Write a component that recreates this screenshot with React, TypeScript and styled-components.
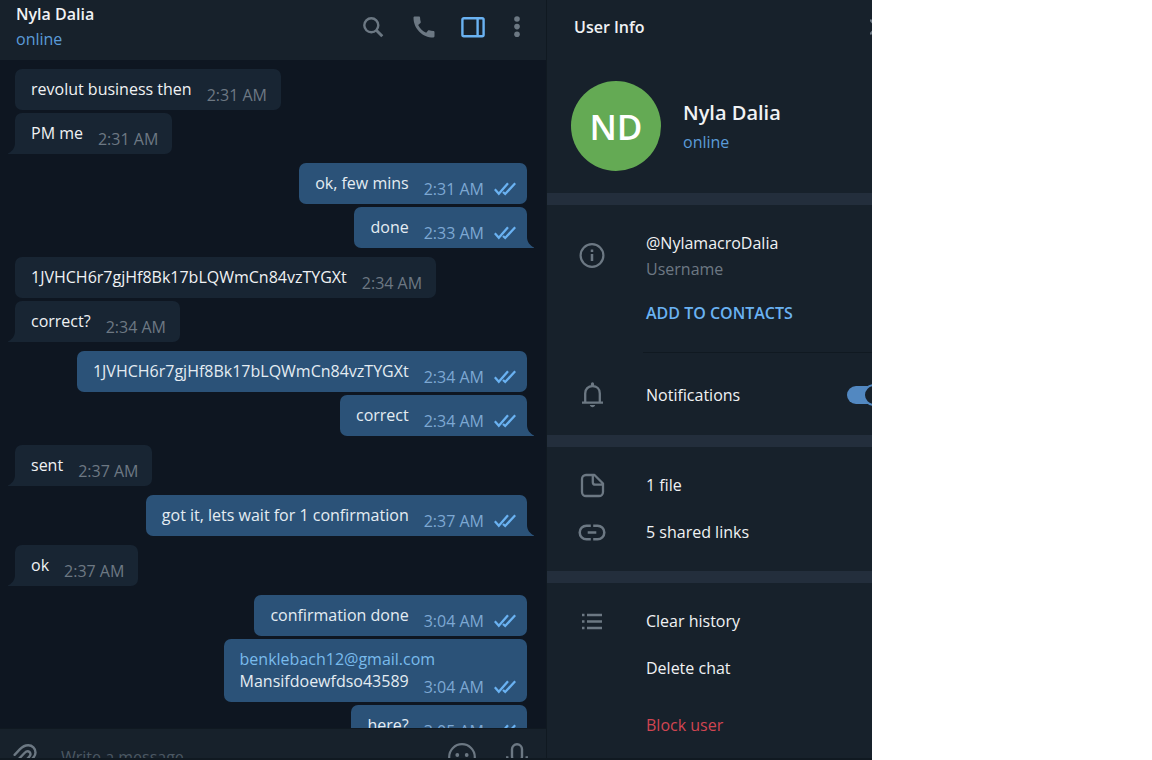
import React from "react";
import styled, { createGlobalStyle, css } from "styled-components";

const c = {
  panel: "#17212b",
  chat: "#0e1621",
  divider: "#232e3c",
  line: "#101921",
  inBubble: "#182533",
  outBubble: "#2b5278",
  text: "#f0f2f4",
  outText: "#e4ecf2",
  muted: "#6d7883",
  icon: "#6c7883",
  accent: "#6ab2f2",
  link: "#79bbec",
  online: "#5b9bd8",
  outTime: "#7da8d3",
  danger: "#d14552",
};

const GlobalStyle = createGlobalStyle`
  *, *::before, *::after { box-sizing: border-box; }
  body {
    margin: 0;
    background: #fff;
    font-family: "Open Sans", "Noto Sans", sans-serif;
    font-size: 16px;
    line-height: 22px;
  }
`;

const Window = styled.div`
  display: flex;
  height: 100vh;
  margin-right: 280px;
  overflow: hidden;
  color: ${c.text};
  background: ${c.panel};
  border-bottom: 2px solid ${c.line};
`;

const Chat = styled.main`
  display: flex;
  flex: 1;
  min-width: 0;
  flex-direction: column;
  border-right: 1px solid ${c.line};
`;

const ChatHeader = styled.header`
  display: flex;
  flex: none;
  justify-content: space-between;
  height: 60px;
  padding: 2px 18px 0 16px;
`;

const Peer = styled.div`
  line-height: 25px;
`;

const PeerName = styled.h1`
  margin: 0;
  font-size: 16px;
  font-weight: 600;
  line-height: inherit;
`;

const Online = styled.div`
  color: ${c.online};
`;

const Tools = styled.div`
  display: flex;
  gap: 23px;
  height: 50px;
  align-items: center;
`;

const IconButton = styled.button<{ $active?: boolean }>`
  display: flex;
  flex: none;
  padding: 0;
  border: 0;
  background: none;
  color: ${(p) => (p.$active ? c.accent : c.icon)};
  cursor: pointer;
`;

const Messages = styled.section`
  display: flex;
  flex: 1;
  min-height: 0;
  flex-direction: column;
  gap: 9px;
  overflow: hidden;
  padding: 9px 19px 0 15px;
  background: ${c.chat};
`;

const Group = styled.div<{ $out?: boolean }>`
  display: flex;
  flex: none;
  flex-direction: column;
  gap: 3px;
  align-items: ${(p) => (p.$out ? "flex-end" : "flex-start")};
`;

const Bubble = styled.article<{ $out?: boolean; $tail?: boolean }>`
  position: relative;
  padding: 9px ${(p) => (p.$out ? 11 : 14)}px 10px 16px;
  border-radius: 7px;
  background: ${(p) => (p.$out ? c.outBubble : c.inBubble)};
  color: ${(p) => (p.$out ? c.outText : c.text)};
  white-space: nowrap;
  ${(p) => p.$tail && (p.$out
    ? css`border-bottom-right-radius: 0;`
    : css`border-bottom-left-radius: 0;`)}
`;

const Tail = styled.svg<{ $out?: boolean }>`
  position: absolute;
  bottom: 0;
  ${(p) => (p.$out ? css`left: 100%;` : css`right: 100%; transform: scaleX(-1);`)}
  fill: ${(p) => (p.$out ? c.outBubble : c.inBubble)};
`;

const LastLine = styled.div`
  display: flex;
  align-items: flex-end;
  gap: 15px;
`;

const MailLink = styled.a`
  display: block;
  width: 0;
  color: ${c.link};
  text-decoration: none;
`;

const Meta = styled.div<{ $out?: boolean }>`
  display: flex;
  align-items: center;
  gap: 10px;
  margin-bottom: -6px;
  color: ${(p) => (p.$out ? c.outTime : c.muted)};
`;

const Ticks = styled.svg`
  fill: none;
  stroke: ${c.accent};
  stroke-width: 2.3;
`;

const Composer = styled.form`
  flex: none;
  height: 30px;
  overflow: hidden;
  border-top: 1px solid ${c.line};
`;

const ComposerRow = styled.div`
  display: flex;
  height: 56px;
  align-items: center;
  gap: 23px;
  padding: 0 15px 0 10px;
`;

const ComposerTools = styled.div`
  display: flex;
  gap: 27px;
`;

const MessageInput = styled.input`
  flex: 1;
  min-width: 0;
  padding: 0;
  border: 0;
  outline: 0;
  background: none;
  color: ${c.text};
  font: inherit;
  &::placeholder { color: #4b5863; opacity: 1; }
`;

const Info = styled.aside`
  flex: 0 0 325px;
  overflow: hidden;
`;

const InfoContent = styled.div`
  width: calc(100% + 36px);
`;

const InfoHeader = styled.header`
  display: flex;
  align-items: center;
  justify-content: space-between;
  height: 54px;
  padding: 0 24px 0 27px;
`;

const InfoTitle = styled.h2`
  margin: 0;
  font-size: 16px;
  font-weight: 600;
`;

const Profile = styled.div`
  display: flex;
  align-items: center;
  gap: 22px;
  padding: 27px 24px 22px;
`;

const ProfileText = styled.div`
  padding-bottom: 4px;
`;

const Avatar = styled.div`
  display: grid;
  flex: none;
  place-items: center;
  width: 90px;
  height: 90px;
  padding-top: 2px;
  border-radius: 50%;
  background: #64aa54;
  color: #fff;
  font-size: 35px;
  font-weight: 600;
  line-height: 48px;
`;

const ProfileName = styled.h3`
  margin: 0;
  font-size: 20px;
  font-weight: 600;
  line-height: 36px;
`;

const Section = styled.section<{ $pad: string }>`
  padding: ${(p) => p.$pad};
  border-top: 12px solid ${c.divider};
`;

const Row = styled.div<{ $h?: number }>`
  display: grid;
  grid-template-columns: 38px 1fr auto;
  column-gap: 35px;
  align-items: center;
  min-height: ${(p) => p.$h ?? 47}px;
  padding: 0 23px 0 26px;
`;

const RowIcon = styled.span`
  display: flex;
  justify-content: center;
  color: ${c.icon};
`;

const Action = styled.button<{ $tone?: "accent" | "danger" }>`
  justify-self: start;
  padding: 0;
  border: 0;
  background: none;
  font: inherit;
  text-align: left;
  cursor: pointer;
  color: ${(p) => (p.$tone === "danger" ? c.danger : p.$tone === "accent" ? c.accent : c.text)};
  font-weight: ${(p) => (p.$tone === "accent" ? 600 : 400)};
`;

const Username = styled.div`
  line-height: 26px;
`;

const Caption = styled.div`
  color: ${c.muted};
`;

const Rule = styled.hr`
  height: 1px;
  margin: 9px 0 18px 96px;
  border: 0;
  background: ${c.line};
`;

const Toggle = styled.input`
  position: relative;
  width: 38px;
  height: 18px;
  margin: 0;
  appearance: none;
  border-radius: 9px;
  background: #5288c1;
  cursor: pointer;
  &::after {
    content: "";
    position: absolute;
    top: -2px;
    right: 0;
    width: 22px;
    height: 22px;
    border: 2px solid #5288c1;
    border-radius: 50%;
    background: ${c.panel};
  }
`;

type IconProps = { w?: number; h?: number; sw?: number; children: React.ReactNode };
const Icon = ({ w = 28, h = 28, sw = 2.2, children }: IconProps) => (
  <svg width={w} height={h} viewBox={`0 0 ${w} ${h}`} fill="none" stroke="currentColor" strokeWidth={sw} aria-hidden="true">
    {children}
  </svg>
);

const SearchIcon = () => (
  <Icon w={28} h={24} sw={2.4}><circle cx="12.3" cy="10.3" r="7" /><path d="M17.3 15.3 23.3 21.3" strokeWidth="2.9" /></Icon>
);
const PhoneIcon = () => (
  <svg width="28" height="28" viewBox="0 0 24 24" fill="currentColor" aria-hidden="true">
    <path d="M20.01 15.38c-1.23 0-2.42-.2-3.53-.56-.35-.12-.74-.03-1.01.24l-1.57 1.97c-2.83-1.35-5.48-3.9-6.89-6.83l1.95-1.66c.27-.28.35-.67.24-1.02-.37-1.11-.56-2.3-.56-3.53 0-.54-.45-.99-.99-.99H4.19C3.65 3 3 3.24 3 3.99 3 13.28 10.73 21 20.01 21c.71 0 .99-.63.99-1.18v-3.45c0-.54-.45-.99-.99-.99z" />
  </svg>
);
const PanelIcon = () => (
  <Icon w={24} h={24} sw={2.4}><rect x="1.4" y="3.2" width="21.2" height="18" rx="1.5" /><path d="M16.6 3.2v18" /></Icon>
);
const MoreIcon = () => (
  <svg width="20" height="24" viewBox="0 0 20 24" fill="currentColor" aria-hidden="true">
    <circle cx="9" cy="4" r="2.8" /><circle cx="9" cy="11.6" r="2.8" /><circle cx="9" cy="19.2" r="2.8" />
  </svg>
);
const CloseIcon = () => (
  <Icon w={14} h={16} sw={2.5}><path d="m1 1.5 12 13M13 1.5 1 14.5" strokeLinecap="round" /></Icon>
);
const InfoIcon = () => (
  <Icon sw={2.2}><circle cx="14" cy="13.5" r="11.4" /><path d="M14 12v7M14 7.5v2.5" strokeWidth="2.5" /></Icon>
);
const BellIcon = () => (
  <Icon sw={2.3}>
    <path d="M7.2 20.8v-8.4c0-4.4 3-7.2 7.3-7.2s7.3 2.8 7.3 7.2v8.4M4 21.7h21" />
    <path d="M14.5 4.5V2.9" strokeWidth="3.2" strokeLinecap="round" />
    <path d="M11.8 24h5.4c-.4 1.4-1.4 2.2-2.7 2.2s-2.3-.8-2.7-2.2z" fill="currentColor" stroke="none" />
  </Icon>
);
const FileIcon = () => (
  <Icon sw={2.3}>
    <path d="M8 4h8.500L25 12.500v8.500a4 4 0 0 1-4 4H8a4 4 0 0 1-4-4V8a4 4 0 0 1 4-4zM14.800 4v7.200a2.500 2.500 0 0 0 2.500 2.500H25" strokeLinejoin="round" />
  </Icon>
);
const LinkIcon = () => (
  <Icon sw={2.5}><path d="M12.800 7.700H8.500a6.800 6.800 0 0 0 0 13.600h4.300M15.200 7.700h4.300a6.800 6.800 0 0 1 0 13.600h-4.300M9.700 14.500h8.600" /></Icon>
);
const ListIcon = () => (
  <Icon sw={2.4}><path d="M4 8h2.500M9 8h15M4 14.500h2.500M9 14.500h15M4 21h2.500M9 21h15" /></Icon>
);
const ClipIcon = () => (
  <Icon sw={2.4}>
    <path d="M4.600 11.800 10 6.200c2.300-2.400 5-3.900 8.200-3.900 4.100 0 7.300 3 7.300 7.100 0 2.300-1 4.100-2.600 5.700L14.500 23.500c-2.400 2.400-5.400 2.400-7 .8s-1.600-4.400.6-6.600M5 20 14.500 10c1.600-1.700 3.700-2.200 5-1 1.500 1.400 1.200 3.200-.3 4.800L12 21.500" strokeLinecap="round" />
  </Icon>
);
const SmileIcon = () => (
  <Icon>
    <circle cx="14" cy="14" r="12.8" />
    <circle cx="9.3" cy="12" r="1.9" fill="currentColor" stroke="none" />
    <circle cx="18.7" cy="12" r="1.9" fill="currentColor" stroke="none" />
    <path d="M8 17.5c2.800 3.800 9.200 3.800 12 0" />
  </Icon>
);
const MicIcon = () => (
  <Icon sw={2.4}><rect x="9" y="1.3" width="10" height="17" rx="5" /><path d="M4.2 13.3c0 12 19.6 12 19.6 0M14 22.5V28" /></Icon>
);

type Message = { text: string; time: string; mail?: string };
const groups: { out?: boolean; open?: boolean; items: Message[] }[] = [
  { items: [{ text: "revolut business then", time: "2:31 AM" }, { text: "PM me", time: "2:31 AM" }] },
  { out: true, items: [{ text: "ok, few mins", time: "2:31 AM" }, { text: "done", time: "2:33 AM" }] },
  { items: [{ text: "1JVHCH6r7gjHf8Bk17bLQWmCn84vzTYGXt", time: "2:34 AM" }, { text: "correct?", time: "2:34 AM" }] },
  { out: true, items: [{ text: "1JVHCH6r7gjHf8Bk17bLQWmCn84vzTYGXt", time: "2:34 AM" }, { text: "correct", time: "2:34 AM" }] },
  { items: [{ text: "sent", time: "2:37 AM" }] },
  { out: true, items: [{ text: "got it, lets wait for 1 confirmation", time: "2:37 AM" }] },
  { items: [{ text: "ok", time: "2:37 AM" }] },
  {
    out: true,
    open: true,
    items: [
      { text: "confirmation done", time: "3:04 AM" },
      { mail: "benklebach12@gmail.com", text: "Mansifdoewfdso43589", time: "3:04 AM" },
      { text: "here?", time: "3:05 AM" },
    ],
  },
];

const ChatBubble = ({ m, out, tail }: { m: Message; out?: boolean; tail: boolean }) => (
  <Bubble $out={out} $tail={tail}>
    {m.mail && <MailLink href={`mailto:${m.mail}`}>{m.mail}</MailLink>}
    <LastLine>
      <span>{m.text}</span>
      <Meta $out={out}>
        <time>{m.time}</time>
        {out && (
          <Ticks width="22" height="14" viewBox="0 0 22 14" role="img" aria-label="Read">
            <path d="M.8 7.2 4.8 11.8 14 1.2M9 10l2.2 2L21.2 1.2" />
          </Ticks>
        )}
      </Meta>
    </LastLine>
    {tail && (
      <Tail $out={out} width="7" height="11" viewBox="0 0 7 11" aria-hidden="true">
        <path d="M0 0C0 5 3 8.5 7 10.5V11H0z" />
      </Tail>
    )}
  </Bubble>
);

export default function App() {
  return (
    <>
      <GlobalStyle />
      <Window>
        <Chat>
          <ChatHeader>
            <Peer>
              <PeerName>Nyla Dalia</PeerName>
              <Online>online</Online>
            </Peer>
            <Tools>
              <IconButton aria-label="Search"><SearchIcon /></IconButton>
              <IconButton aria-label="Call"><PhoneIcon /></IconButton>
              <IconButton $active aria-label="Toggle info panel"><PanelIcon /></IconButton>
              <IconButton aria-label="More"><MoreIcon /></IconButton>
            </Tools>
          </ChatHeader>
          <Messages>
            {groups.map((g, i) => (
              <Group key={i} $out={g.out}>
                {g.items.map((m, j) => (
                  <ChatBubble key={j} m={m} out={g.out} tail={!g.open && j === g.items.length - 1} />
                ))}
              </Group>
            ))}
          </Messages>
          <Composer>
            <ComposerRow>
              <IconButton type="button" aria-label="Attach"><ClipIcon /></IconButton>
              <MessageInput aria-label="Message" placeholder="Write a message..." />
              <ComposerTools>
                <IconButton type="button" aria-label="Emoji"><SmileIcon /></IconButton>
                <IconButton type="button" aria-label="Voice message"><MicIcon /></IconButton>
              </ComposerTools>
            </ComposerRow>
          </Composer>
        </Chat>

        <Info>
          <InfoContent>
            <InfoHeader>
              <InfoTitle>User Info</InfoTitle>
              <IconButton aria-label="Close"><CloseIcon /></IconButton>
            </InfoHeader>
            <Profile>
              <Avatar>ND</Avatar>
              <ProfileText>
                <ProfileName>Nyla Dalia</ProfileName>
                <Online>online</Online>
              </ProfileText>
            </Profile>

            <Section $pad="25px 0 17px">
              <Row $h={52}>
                <RowIcon><InfoIcon /></RowIcon>
                <Username>
                  @NylamacroDalia
                  <Caption>Username</Caption>
                </Username>
              </Row>
              <Row $h={61}>
                <span />
                <Action $tone="accent">ADD TO CONTACTS</Action>
              </Row>
              <Rule />
              <Row>
                <RowIcon><BellIcon /></RowIcon>
                <label htmlFor="notifications">Notifications</label>
                <Toggle id="notifications" type="checkbox" role="switch" defaultChecked />
              </Row>
            </Section>

            <Section $pad="14px 0 16px">
              <Row>
                <RowIcon><FileIcon /></RowIcon>
                <Action>1 file</Action>
              </Row>
              <Row>
                <RowIcon><LinkIcon /></RowIcon>
                <Action>5 shared links</Action>
              </Row>
            </Section>

            <Section $pad="14px 0 16px">
              <Row>
                <RowIcon><ListIcon /></RowIcon>
                <Action>Clear history</Action>
              </Row>
              <Row>
                <span />
                <Action>Delete chat</Action>
              </Row>
              <Row $h={67}>
                <span />
                <Action $tone="danger">Block user</Action>
              </Row>
            </Section>
          </InfoContent>
        </Info>
      </Window>
    </>
  );
}
